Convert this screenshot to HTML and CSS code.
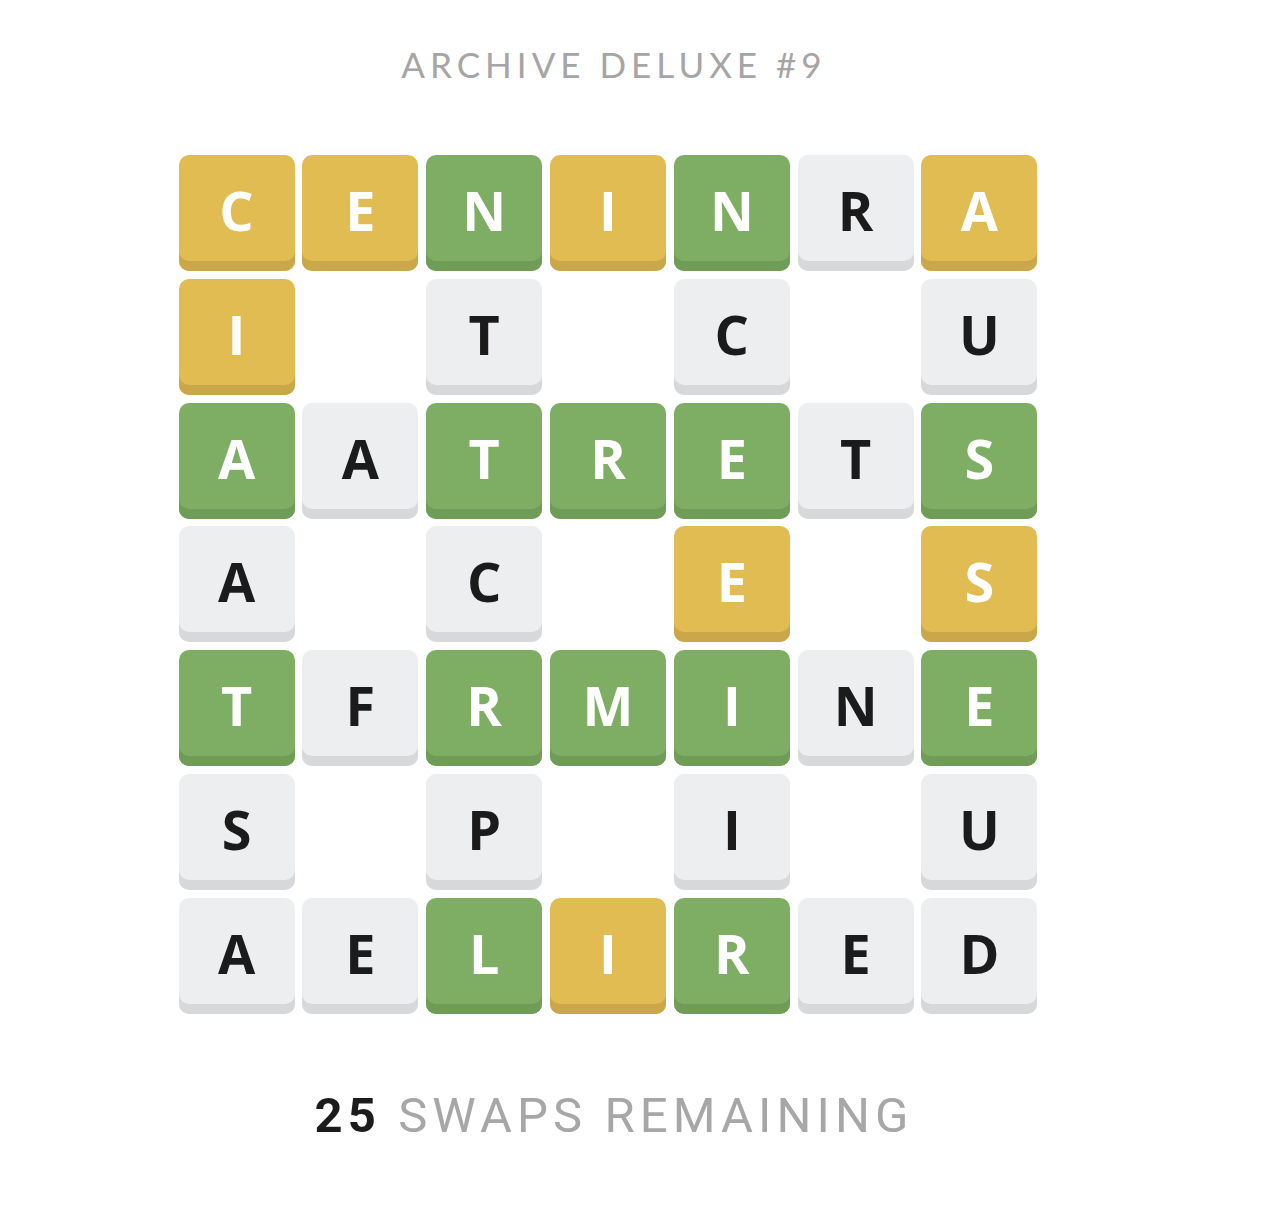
FILE: index.html
```html
<!DOCTYPE html>
<html>
<head>
<meta charset="utf-8">
<link rel="stylesheet" href="styles.css">
</head>
<body>
<main class="page">
  <h1 class="title">ARCHIVE DELUXE #9</h1>
  <div class="board">
    <div class="tile y">C</div><div class="tile y">E</div><div class="tile g">N</div><div class="tile y">I</div><div class="tile g">N</div><div class="tile n">R</div><div class="tile y">A</div>
    <div class="tile y">I</div><div class="gap"></div><div class="tile n">T</div><div class="gap"></div><div class="tile n">C</div><div class="gap"></div><div class="tile n">U</div>
    <div class="tile g">A</div><div class="tile n">A</div><div class="tile g">T</div><div class="tile g">R</div><div class="tile g">E</div><div class="tile n">T</div><div class="tile g">S</div>
    <div class="tile n">A</div><div class="gap"></div><div class="tile n">C</div><div class="gap"></div><div class="tile y">E</div><div class="gap"></div><div class="tile y">S</div>
    <div class="tile g">T</div><div class="tile n">F</div><div class="tile g">R</div><div class="tile g">M</div><div class="tile g">I</div><div class="tile n">N</div><div class="tile g">E</div>
    <div class="tile n">S</div><div class="gap"></div><div class="tile n">P</div><div class="gap"></div><div class="tile n">I</div><div class="gap"></div><div class="tile n">U</div>
    <div class="tile n">A</div><div class="tile n">E</div><div class="tile g">L</div><div class="tile y">I</div><div class="tile g">R</div><div class="tile n">E</div><div class="tile n">D</div>
  </div>
  <p class="swaps"><span class="count">25</span> SWAPS REMAINING</p>
</main>
</body>
</html>
```

FILE: styles.css
```css
html, body {
  margin: 0;
  padding: 0;
  background: #ffffff;
}

.page {
  width: 1216px;
  display: flex;
  flex-direction: column;
  align-items: center;
  font-family: "Lato", "Open Sans", sans-serif;
}

.title {
  margin: 44px 0 0 0;
  padding-left: 12px;
  font-size: 35px;
  line-height: 40px;
  font-weight: 400;
  letter-spacing: 5px;
  color: #a5a5a5;
}

.board {
  margin-top: 71px;
  display: grid;
  grid-template-columns: repeat(7, 116px);
  grid-auto-rows: 116px;
  gap: 7.83px;
}

.tile {
  border-radius: 10px;
  display: flex;
  align-items: center;
  justify-content: center;
  padding-bottom: 6px;
  box-sizing: border-box;
  font-family: "Open Sans", "Lato", sans-serif;
  font-size: 54px;
  font-weight: 700;
  color: #ffffff;
}

.tile.y {
  background: #e1bc52;
  box-shadow: inset 0 -10px 0 #caa748;
}

.tile.g {
  background: #7eae64;
  box-shadow: inset 0 -10px 0 #6f9d58;
}

.tile.n {
  background: #edeef0;
  box-shadow: inset 0 -10px 0 #d7d8da;
  color: #1b1b1b;
}

.swaps {
  margin: 74px 0 0 0;
  padding-left: 12px;
  font-size: 49px;
  line-height: 56px;
  letter-spacing: 5.1px;
  color: #a7a7a7;
  font-family: "Roboto", "Open Sans", sans-serif;
}

.swaps .count {
  color: #1b1b1b;
  font-weight: 700;
}
```
